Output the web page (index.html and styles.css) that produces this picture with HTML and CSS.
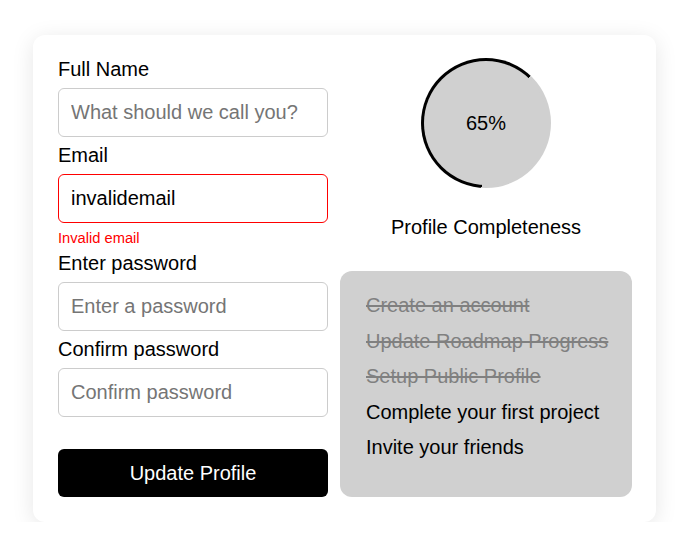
FILE: index.html
```html
<!DOCTYPE html>
<html lang="en">
<head>
<meta charset="utf-8">
<title>Profile</title>
<link rel="stylesheet" href="styles.css">
</head>
<body>
<div class="card">
  <form class="form">
    <label class="label" for="name">Full Name</label>
    <input class="input" id="name" type="text" placeholder="What should we call you?">
    <label class="label" for="email">Email</label>
    <input class="input input-error" id="email" type="text" value="invalidemail">
    <div class="error">Invalid email</div>
    <label class="label" for="pw">Enter password</label>
    <input class="input" id="pw" type="password" placeholder="Enter a password">
    <label class="label" for="pw2">Confirm password</label>
    <input class="input" id="pw2" type="password" placeholder="Confirm password">
    <button class="button" type="button">Update Profile</button>
  </form>
  <div class="side">
    <div class="progress">
      <div class="progress-inner">65%</div>
    </div>
    <div class="progress-title">Profile Completeness</div>
    <ul class="tasks">
      <li class="task done">Create an account</li>
      <li class="task done">Update Roadmap Progress</li>
      <li class="task done">Setup Public Profile</li>
      <li class="task">Complete your first project</li>
      <li class="task">Invite your friends</li>
    </ul>
  </div>
</div>
</body>
</html>
```

FILE: styles.css
```css
* { box-sizing: border-box; }
html, body { margin: 0; background: #ffffff; }
body {
  font-family: "Liberation Sans", Arial, sans-serif;
  font-size: 20px;
  color: #000;
  padding: 35px 33px 0 33px;
}
.card {
  display: flex;
  gap: 12px;
  background: #fff;
  border-radius: 12px;
  box-shadow: 0 4px 22px rgba(0, 0, 0, 0.1);
  padding: 23px 24px 25px 25px;
  height: 487px;
}
.form {
  width: 270px;
  flex-shrink: 0;
  display: flex;
  flex-direction: column;
}
.label {
  display: block;
  line-height: 23px;
  margin-bottom: 7px;
}
.input {
  display: block;
  width: 100%;
  height: 49px;
  font-family: inherit;
  font-size: 20px;
  line-height: 23px;
  padding: 12px;
  border: 1px solid #cccccc;
  border-radius: 6px;
  color: #000;
  outline: none;
  margin: 0 0 7px 0;
}
.input::placeholder { color: #757575; }
.input-error { border-color: #ff0000; }
.error {
  color: #ff0000;
  font-size: 14.7px;
  line-height: 17px;
  margin-bottom: 5px;
}
.button {
  margin-top: 25px;
  height: 48px;
  flex-shrink: 0;
  border: none;
  border-radius: 6px;
  background: #000;
  color: #fff;
  font-family: inherit;
  font-size: 20px;
}
.side {
  flex: 1;
  min-width: 0;
  display: flex;
  flex-direction: column;
  align-items: center;
}
.progress {
  width: 130px;
  height: 130px;
  flex-shrink: 0;
  border-radius: 50%;
  background: conic-gradient(from 184deg, #000 0 61%, #d0d0d0 61% 100%);
  padding: 3px;
}
.progress-inner {
  width: 100%;
  height: 100%;
  border-radius: 50%;
  background: #d0d0d0;
  display: flex;
  align-items: center;
  justify-content: center;
  line-height: 23px;
}
.progress-title {
  margin-top: 28px;
  line-height: 23px;
  flex-shrink: 0;
}
.tasks {
  align-self: stretch;
  flex-shrink: 0;
  list-style: none;
  margin: 32px 0 0 0;
  padding: 17px 20px 31px 26px;
  background: #d0d0d0;
  border-radius: 12px;
}
.task {
  line-height: 23px;
  padding: 6.25px 0;
  white-space: nowrap;
}
.task.done {
  color: #808080;
  text-decoration: line-through;
}
```
